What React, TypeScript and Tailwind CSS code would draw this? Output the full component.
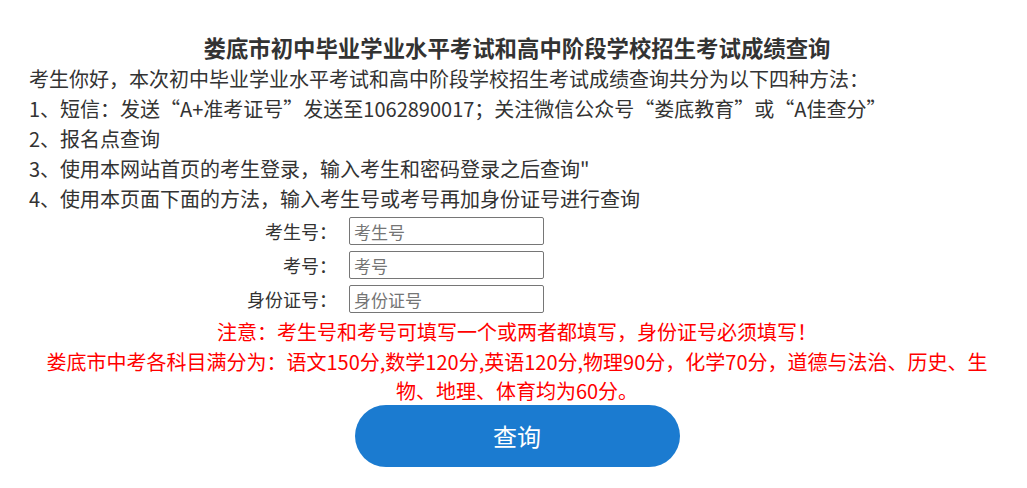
import React from "react";

const font = { fontFamily: '"Noto Sans CJK SC", "Noto Sans", sans-serif' };

function Row({ label, ph }: { label: string; ph: string }) {
  return (
    <div className="flex items-center h-[28px]">
      <div className="w-[120px] ml-[217px] text-right text-[18px] leading-[28px] text-[#333]">{label}</div>
      <input
        className="ml-[12px] w-[195px] h-[28px] border border-[#767676] rounded-[2px] pl-[4px] text-[17px] leading-[26px] text-[#333] placeholder:text-[#757575] outline-none"
        placeholder={ph}
      />
    </div>
  );
}

export default function App() {
  return (
    <div className="w-[1027px] h-[488px] bg-white overflow-hidden" style={font}>
      <div className="pt-[32px]">
        <div className="pl-[7px] text-center text-[22.4px] font-bold leading-[30px] text-[#333]">
          娄底市初中毕业学业水平考试和高中阶段学校招生考试成绩查询
        </div>
        <div className="mt-[2px] pl-[29px] text-[20px] leading-[30px] text-[#333]">
          <div>考生你好，本次初中毕业学业水平考试和高中阶段学校招生考试成绩查询共分为以下四种方法：</div>
          <div>1、短信：发送“A+准考证号”发送至1062890017；关注微信公众号“娄底教育”或“A佳查分”</div>
          <div>2、报名点查询</div>
          <div>3、使用本网站首页的考生登录，输入考生和密码登录之后查询"</div>
          <div>4、使用本页面下面的方法，输入考生号或考号再加身份证号进行查询</div>
        </div>
        <div className="mt-[3px] flex flex-col gap-[6px]">
          <Row label="考生号：" ph="考生号" />
          <Row label="考号：" ph="考号" />
          <Row label="身份证号：" ph="身份证号" />
        </div>
        <div className="mt-[4px] pl-[7px] text-center text-[20px] leading-[30px] text-[#ff0000]">
          注意：考生号和考号可填写一个或两者都填写，身份证号必须填写！
        </div>
        <div className="pl-[7px] text-center text-[20px] leading-[29px] text-[#ff0000] whitespace-nowrap">
          娄底市中考各科目满分为：语文150分,数学120分,英语120分,物理90分，化学70分，道德与法治、历史、生
          <br />
          物、地理、体育均为60分。
        </div>
        <div className="pl-[7px] flex justify-center">
          <button className="w-[325px] h-[62px] rounded-full bg-[#1b7bd0] text-white text-[24px] leading-[62px]">
            查询
          </button>
        </div>
      </div>
    </div>
  );
}
